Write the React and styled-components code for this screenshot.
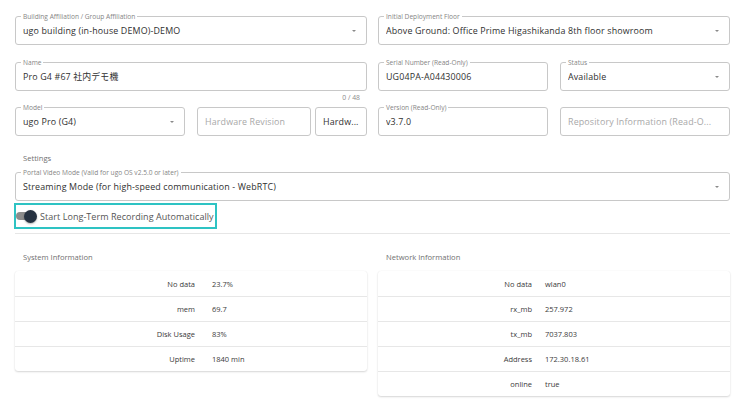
import React from "react";
import styled, { createGlobalStyle } from "styled-components";

const Global = createGlobalStyle`
  html, body { margin: 0; padding: 0; background: #fff; }
  body { font-family: "Open Sans", "Noto Sans CJK JP", sans-serif; color: #2b2b2b; }
  * { box-sizing: border-box; }
`;

const Page = styled.div`
  width: 738px;
  height: 403px;
  padding: 16px 8px 0 15px;
  overflow: hidden;
`;

const TwoCol = styled.div`
  display: grid;
  grid-template-columns: 352px 352px;
  column-gap: 11px;
  margin-bottom: ${(p) => p.$mb || 0}px;
`;

const Split = styled.div`
  display: grid;
  grid-template-columns: ${(p) => p.$cols};
  column-gap: ${(p) => p.$gap}px;
  align-self: start;
`;

const FieldWrap = styled.div`
  display: flex;
  flex-direction: column;
`;

const Box = styled.div`
  position: relative;
  height: 29px;
  margin-left: ${(p) => p.$shift || 0}px;
  border: 1px solid #c8c8c8;
  border-radius: 3px;
  display: flex;
  align-items: center;
  padding: 0 7px 0 7px;
  min-width: 0;
`;

const Legend = styled.span`
  position: absolute;
  top: -5px;
  left: 5px;
  padding: 0 2px;
  background: #fff;
  font-size: 6.6px;
  line-height: 9px;
  color: #858585;
  white-space: nowrap;
`;

const Value = styled.span`
  flex: 1;
  min-width: 0;
  font-size: 8.9px;
  color: ${(p) => (p.$placeholder ? "#a8a8a8" : "#303030")};
  white-space: nowrap;
  overflow: hidden;
  text-overflow: ellipsis;
  letter-spacing: 0.15px;
`;

const Arrow = styled.span`
  width: 0;
  height: 0;
  border-left: 2.5px solid transparent;
  border-right: 2.5px solid transparent;
  border-top: 2.5px solid #8a8a8a;
  margin-right: 3px;
  flex-shrink: 0;
`;

const Helper = styled.div`
  height: 16px;
  text-align: right;
  padding-right: 7px;
  font-size: 6.8px;
  line-height: 13px;
  color: #8a8a8a;
`;

const SectionTitle = styled.div`
  font-size: 7.6px;
  color: #707070;
  padding-left: 8px;
  line-height: 10px;
  margin: ${(p) => p.$m};
`;

const Highlight = styled.div`
  display: inline-flex;
  align-items: center;
  gap: 5px;
  margin: 2px 0 0 -1px;
  width: 203px;
  height: 26px;
  border: 2px solid #2ec3c3;
  padding-left: 0;
`;

const Track = styled.span`
  position: relative;
  width: 19px;
  height: 8px;
  border-radius: 4px;
  background: #8c8c8c;
`;

const Thumb = styled.span`
  position: absolute;
  right: -2px;
  top: -2.5px;
  width: 13px;
  height: 13px;
  border-radius: 50%;
  background: #263241;
  box-shadow: 0 1px 2px rgba(0, 0, 0, 0.3);
`;

const SwitchLabel = styled.span`
  font-size: 9px;
  color: #555;
  white-space: nowrap;
  letter-spacing: 0.05px;
`;

const Divider = styled.div`
  height: 1px;
  background: #e6e6e6;
  margin-top: 4px;
`;

const TableCard = styled.div`
  background: #fff;
  border-radius: 3px;
  box-shadow: 0 1px 2px rgba(0, 0, 0, 0.16), 0 0 1px rgba(0, 0, 0, 0.08);
  align-self: start;
`;

const Row = styled.div`
  display: grid;
  grid-template-columns: ${(p) => p.$lw}px 1fr;
  column-gap: ${(p) => p.$gap}px;
  height: 25.1px;
  align-items: center;
  font-size: 7.5px;
  color: #3a3a3a;
  border-top: ${(p) => (p.$first ? "none" : "1px solid #e7e7e7")};
`;

const Key = styled.span`
  text-align: right;
`;

const Field = ({ label, value, placeholder, select, shift }) => (
  <Box $shift={shift}>
    {label && <Legend>{label}</Legend>}
    <Value $placeholder={placeholder}>{value}</Value>
    {select && <Arrow />}
  </Box>
);

const InfoTable = ({ rows, lw, gap }) => (
  <TableCard>
    {rows.map(([k, v], i) => (
      <Row key={k} $first={i === 0} $lw={lw} $gap={gap}>
        <Key>{k}</Key>
        <span>{v}</span>
      </Row>
    ))}
  </TableCard>
);

export default function App() {
  return (
    <>
      <Global />
      <Page>
        <TwoCol $mb={17}>
          <Field label="Building Affiliation / Group Affiliation" value="ugo building (in-house DEMO)-DEMO" select />
          <Field label="Initial Deployment Floor" value="Above Ground: Office Prime Higashikanda 8th floor showroom" select />
        </TwoCol>
        <TwoCol>
          <FieldWrap>
            <Field label="Name" value="Pro G4 #67 社内デモ機" />
            <Helper>0 / 48</Helper>
          </FieldWrap>
          <Split $cols="170px 170px" $gap={12}>
            <Field label="Serial Number (Read-Only)" value="UG04PA-A04430006" />
            <Field label="Status" value="Available" select />
          </Split>
        </TwoCol>
        <TwoCol>
          <Split $cols="170px 114px 1fr" $gap={12}>
            <Field label="Model" value="ugo Pro (G4)" select />
            <Field value="Hardware Revision" placeholder />
            <Field value="Hardw..." shift={-8} />
          </Split>
          <Split $cols="170px 170px" $gap={12}>
            <Field label="Version (Read-Only)" value="v3.7.0" />
            <Field value="Repository Information (Read-O..." placeholder />
          </Split>
        </TwoCol>
        <SectionTitle $m="17px 0 9px">Settings</SectionTitle>
        <Field label="Portal Video Mode (Valid for ugo OS v2.5.0 or later)" value="Streaming Mode (for high-speed communication - WebRTC)" select />
        <Highlight>
          <Track>
            <Thumb />
          </Track>
          <SwitchLabel>Start Long-Term Recording Automatically</SwitchLabel>
        </Highlight>
        <Divider />
        <TwoCol>
          <div>
            <SectionTitle $m="18px 0 9px">System Information</SectionTitle>
            <InfoTable
              lw={180}
              gap={17}
              rows={[
                ["No data", "23.7%"],
                ["mem", "69.7"],
                ["Disk Usage", "83%"],
                ["Uptime", "1840 min"],
              ]}
            />
          </div>
          <div>
            <SectionTitle $m="18px 0 9px">Network Information</SectionTitle>
            <InfoTable
              lw={154}
              gap={13}
              rows={[
                ["No data", "wlan0"],
                ["rx_mb", "257.972"],
                ["tx_mb", "7037.803"],
                ["Address", "172.30.18.61"],
                ["online", "true"],
              ]}
            />
          </div>
        </TwoCol>
      </Page>
    </>
  );
}
